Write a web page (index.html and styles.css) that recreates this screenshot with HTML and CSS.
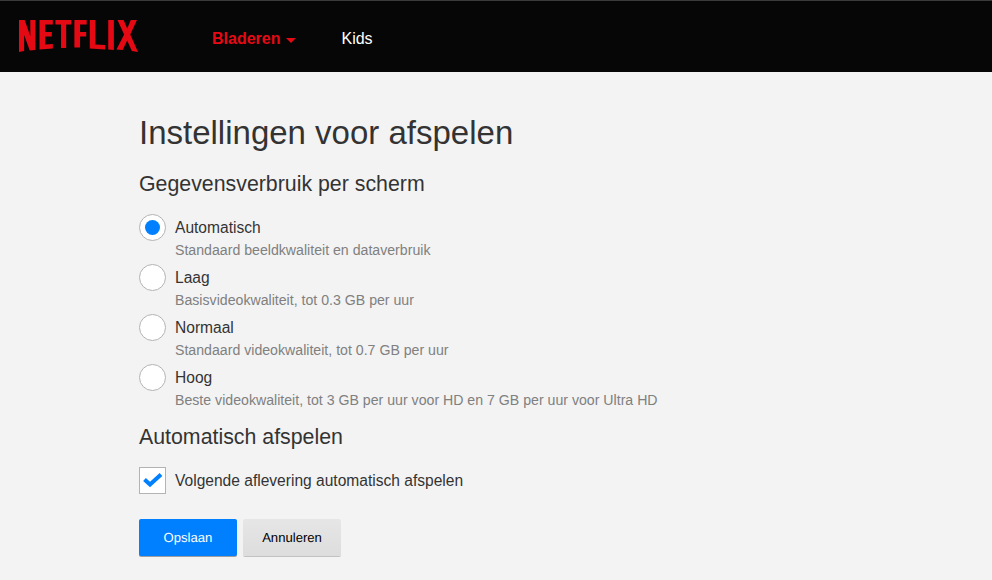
FILE: index.html
```html
<!DOCTYPE html>
<html lang="nl">
<head>
<meta charset="utf-8">
<title>Instellingen voor afspelen</title>
<link rel="stylesheet" href="styles.css">
</head>
<body>
<header class="topbar">
  <svg class="logo" width="120" height="33" viewBox="0 0 117 33" preserveAspectRatio="none" aria-label="Netflix">
    <path class="logo-mark" d="M0 1H5.500L11 17V1H16V31L10.500 31.500L5 16V32L0 33Z"/>
    <path class="logo-mark" d="M20 1H33V5.500H25.500V13H32V17.500H25.500V25.500L33 25V29.500L20 30.500Z"/>
    <path class="logo-mark" d="M35.500 1H51V5.500H46V29H41V5.500H35.500Z"/>
    <path class="logo-mark" d="M54 1H66V5.500H59.500V13H65.500V17.500H59.500V28.500H54Z"/>
    <path class="logo-mark" d="M69 1H74.500V25.500L84 26V30.500L69 29.500Z"/>
    <path class="logo-mark" d="M87 1H92.500V31L87 30.500Z"/>
    <path class="logo-mark" d="M96 1H102L105.500 9.500L109 1H115L108.500 15.500L116 33L110 32L105.500 21.500L101 31L95 30.500L102.500 15.500Z"/>
  </svg>
  <nav class="nav">
    <a class="nav-link nav-active">Bladeren <span class="caret"></span></a>
    <a class="nav-link">Kids</a>
  </nav>
</header>
<main class="content">
  <h1 class="title">Instellingen voor afspelen</h1>
  <h2 class="section first">Gegevensverbruik per scherm</h2>
  <div class="options">
    <div class="option">
      <span class="radio radio-on"></span>
      <div><div class="label">Automatisch</div><div class="hint">Standaard beeldkwaliteit en dataverbruik</div></div>
    </div>
    <div class="option">
      <span class="radio"></span>
      <div><div class="label">Laag</div><div class="hint">Basisvideokwaliteit, tot 0.3 GB per uur</div></div>
    </div>
    <div class="option">
      <span class="radio"></span>
      <div><div class="label">Normaal</div><div class="hint">Standaard videokwaliteit, tot 0.7 GB per uur</div></div>
    </div>
    <div class="option">
      <span class="radio"></span>
      <div><div class="label">Hoog</div><div class="hint">Beste videokwaliteit, tot 3 GB per uur voor HD en 7 GB per uur voor Ultra HD</div></div>
    </div>
  </div>
  <h2 class="section">Automatisch afspelen</h2>
  <div class="check-row">
    <span class="checkbox">
      <svg width="20" height="16" viewBox="0 0 20 16"><path class="tick" d="M1.500 6.500L7 11.500L18 1.500"/></svg>
    </span>
    <span class="label">Volgende aflevering automatisch afspelen</span>
  </div>
  <div class="actions">
    <button class="btn btn-primary">Opslaan</button>
    <button class="btn btn-secondary">Annuleren</button>
  </div>
</main>
</body>
</html>
```
FILE: styles.css
```css
* { box-sizing: border-box; }
html, body { margin: 0; height: 100%; }
body {
  background: #f3f3f3;
  color: #333;
  font-family: "Liberation Sans", Arial, sans-serif;
  overflow: hidden;
}
.topbar {
  height: 72px;
  background: #060606;
  border-top: 1px solid #3a3a3a;
  display: flex;
  align-items: flex-start;
  padding: 18px 0 0 19px;
}
.logo { display: block; flex: none; }
.logo-mark { fill: #e50914; }
.nav { display: flex; gap: 45px; margin-left: 73px; padding-top: 11px; }
.nav-link { font-size: 16px; line-height: 18px; color: #fff; }
.nav-active { color: #e50914; font-weight: 700; display: flex; align-items: center; gap: 6px; }
.caret {
  display: block;
  width: 0; height: 0;
  margin-top: 3px;
  border-left: 5px solid transparent;
  border-right: 5px solid transparent;
  border-top: 5px solid #e50914;
}
.content { padding: 0 0 0 139px; }
.title { margin: 41px 0 0; font-size: 33px; line-height: 40px; font-weight: 400; }
.section { margin: 17px 0 0; font-size: 21.33px; line-height: 28px; font-weight: 400; }
.options { margin-top: 16px; display: flex; flex-direction: column; gap: 8px; }
.option { display: flex; gap: 9px; height: 42px; }
.radio {
  width: 27px; height: 27px; flex: none;
  border-radius: 50%;
  background: #fff;
  border: 1px solid #b3b3b3;
  display: flex; align-items: center; justify-content: center;
}
.radio-on::after {
  content: "";
  width: 15px; height: 15px;
  border-radius: 50%;
  background: #0080ff;
}
.label { font-size: 15.57px; line-height: 27px; }
.hint { font-size: 14.15px; line-height: 18px; color: #808080; }
.check-row { margin-top: 16px; display: flex; gap: 9px; align-items: center; }
.checkbox {
  width: 27px; height: 27px; flex: none;
  background: #fff;
  border: 1px solid #b3b3b3;
  display: flex; align-items: center; justify-content: center;
}
.tick { fill: none; stroke: #0080ff; stroke-width: 4; }
.actions { margin-top: 25px; display: flex; gap: 6px; }
.btn {
  width: 98px; height: 37px;
  border: 0; border-radius: 2px;
  font-family: inherit; font-size: 13.1px;
  text-rendering: geometricPrecision;
  padding: 0;
}
.btn-primary { background: #0080ff; color: #fff; box-shadow: 0 1px 0 rgba(0,0,0,.35); }
.btn-secondary { background: linear-gradient(#e6e6e6, #dddddd); color: #000; box-shadow: 0 1px 0 rgba(0,0,0,.2); }
```
